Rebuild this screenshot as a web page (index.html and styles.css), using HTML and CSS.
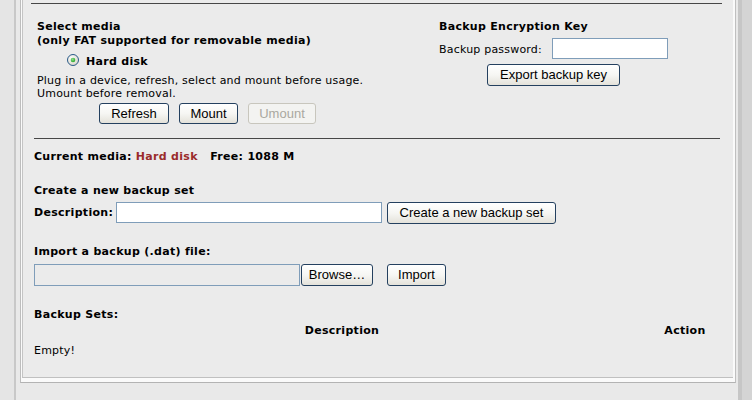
FILE: index.html
```html
<!DOCTYPE html>
<html>
<head>
<meta charset="utf-8">
<link rel="stylesheet" href="styles.css">
</head>
<body>
<div class="shell">
  <div class="frame">
    <div class="outer">
      <div class="panel">
        <div class="rule rule-top"></div>
        <div class="media-row">
          <div class="col-left">
            <div class="b line14">Select media</div>
            <div class="b line14">(only FAT supported for removable media)</div>
            <label class="radio-row">
              <span class="radio"><svg width="12" height="12" viewBox="0 0 12 12"><defs><radialGradient id="rb" cx="0.4" cy="0.35" r="0.7"><stop offset="0" stop-color="#ffffff"/><stop offset="1" stop-color="#d6d3c6"/></radialGradient><radialGradient id="rd" cx="0.4" cy="0.35" r="0.7"><stop offset="0" stop-color="#8ee08e"/><stop offset="1" stop-color="#21a121"/></radialGradient></defs><circle cx="6" cy="6" r="5.5" fill="url(#rb)" stroke="#2a5b8a" stroke-width="1"/><circle cx="6" cy="6" r="2.3" fill="url(#rd)"/></svg></span>
              <span class="b">Hard disk</span>
            </label>
            <div class="hint">Plug in a device, refresh, select and mount before usage.<br>Umount before removal.</div>
            <div class="btn-row">
              <button class="btn w-refresh">Refresh</button>
              <button class="btn w-mount">Mount</button>
              <button class="btn w-umount" disabled>Umount</button>
            </div>
          </div>
          <div class="col-right">
            <div class="b line14">Backup Encryption Key</div>
            <div class="pw-row">
              <span class="pw-label">Backup password:</span>
              <input class="text-in pw-in" type="password">
            </div>
            <div class="export-row"><button class="btn w-export">Export backup key</button></div>
          </div>
        </div>
        <div class="rule rule-mid"></div>

        <div class="b line14 current">Current media: <span class="red">Hard disk</span>&nbsp;&nbsp; Free: 1088 M</div>

        <div class="b line14 create-title">Create a new backup set</div>
        <div class="desc-row">
          <span class="b desc-label">Description:</span>
          <input class="text-in desc-in" type="text">
          <button class="btn w-create">Create a new backup set</button>
        </div>

        <div class="b line14 import-title">Import a backup (.dat) file:</div>
        <div class="file-row">
          <input class="file-path" type="text" readonly>
          <button class="btn w-browse">Browse…</button>
          <button class="btn w-import">Import</button>
        </div>

        <div class="b line14 sets-title">Backup Sets:</div>
        <div class="sets-head">
          <span class="b col-desc">Description</span>
          <span class="b col-action">Action</span>
        </div>
        <div class="empty">Empty!</div>
      </div>
    </div>
  </div>
</div>
</body>
</html>
```

FILE: styles.css
```css
html, body {
  margin: 0;
  padding: 0;
}
body {
  background: #d4d4d4;
  font-family: "DejaVu Sans", Verdana, sans-serif;
  font-size: 11px;
  letter-spacing: 0.2px;
  color: #000;
  height: 400px;
  overflow: hidden;
}
.shell {
  width: 742px;
  height: 400px;
  background: #e5e5e5;
  padding-left: 14px;
  box-sizing: border-box;
}
.frame {
  height: 400px;
  width: 728px;
  box-sizing: border-box;
  border-left: 2px solid #c8c8c8;
  border-right: 4px solid #c6c6c6;
  padding-left: 4px;
  padding-right: 2px;
  background: #e9e9e9;
}
.outer {
  width: 716px;
  box-sizing: border-box;
  border-left: 1px solid #bdbdbd;
  border-right: 1px solid #bfbfbf;
  border-bottom: 1px solid #b3b3b3;
  background: #fafafa;
  padding: 0 2px 4px 1px;
}
.panel {
  height: 378px;
  box-sizing: border-box;
  background: #ebebeb;
  border-left: 1px solid #c4c4c4;
  border-bottom: 1px solid #c0c0c0;
  padding: 3px 13px 0 11px;
}
.b { font-weight: bold; letter-spacing: 0.3px; }
.line14 { line-height: 14px; }
.rule { border-top: 1px solid #474747; height: 0; }
.rule-top { margin: 0 -2px 0 -3px; }
.rule-mid { margin-top: 14px; }

.media-row {
  display: grid;
  grid-template-columns: 402px 229px;
  padding-left: 3px;
  margin-top: 16px;
  align-items: start;
}
.radio-row {
  display: flex;
  align-items: flex-start;
  gap: 7px;
  height: 14px;
  line-height: 14px;
  margin-top: 7px;
  padding-left: 30px;
}
.radio { display: block; width: 12px; height: 12px; margin-top: -1px; }
.radio svg { display: block; }
.hint {
  line-height: 13px;
  margin-top: 5px;
}
.btn-row {
  display: flex;
  gap: 10px;
  margin-top: 3px;
  padding-left: 62px;
}
.btn {
  font-family: "Liberation Sans", Arial, sans-serif;
  font-size: 13px;
  letter-spacing: 0;
  color: #000;
  height: 22px;
  padding: 0 4px;
  box-sizing: border-box;
  border: 1px solid #24405f;
  border-radius: 3px;
  background: linear-gradient(#ffffff 0%, #f6f6f3 50%, #e4e2da 100%);
  line-height: 18px;
}
.btn:disabled {
  color: #aaa8a0;
  border-color: #c8c6bd;
  background: #f3f3f1;
}
.w-refresh { width: 70px; height: 21px; }
.w-mount { width: 59px; height: 21px; }
.w-umount { width: 68px; height: 21px; }
.w-export { width: 133px; }
.w-create { width: 169px; }
.w-browse { width: 72px; }
.w-import { width: 59px; }

.pw-row {
  display: flex;
  align-items: flex-start;
  margin-top: 4px;
}
.pw-label {
  width: 113px;
  line-height: 14px;
  padding-top: 5px;
}
.text-in {
  height: 21px;
  box-sizing: border-box;
  border: 1px solid #7f9db9;
  background: #fff;
  margin: 0;
  padding: 0 2px;
}
.pw-in { width: 116px; }
.export-row {
  display: flex;
  justify-content: center;
  margin-top: 5px;
}

.current { margin-top: 11px; }
.red { color: #9a2b2b; }
.create-title { margin-top: 20px; }
.desc-row {
  display: flex;
  align-items: flex-start;
  margin-top: 4px;
}
.desc-label {
  width: 82px;
  line-height: 14px;
  padding-top: 4px;
}
.desc-in { width: 266px; }
.desc-row .btn { margin-left: 5px; }

.import-title { margin-top: 21px; }
.file-row {
  display: flex;
  align-items: flex-start;
  margin-top: 5px;
}
.file-path {
  width: 266px;
  height: 22px;
  box-sizing: border-box;
  border: 1px solid #7f9db9;
  background: #ebebeb;
  margin: 0;
}
.w-browse { margin-left: 1px; }
.w-import { margin-left: 14px; }

.sets-title { margin-top: 22px; }
.sets-head {
  display: flex;
  line-height: 14px;
  margin-top: 2px;
}
.col-desc { width: 616px; text-align: center; }
.col-action { width: 70px; text-align: center; }
.empty {
  line-height: 14px;
  margin-top: 6px;
}
```
